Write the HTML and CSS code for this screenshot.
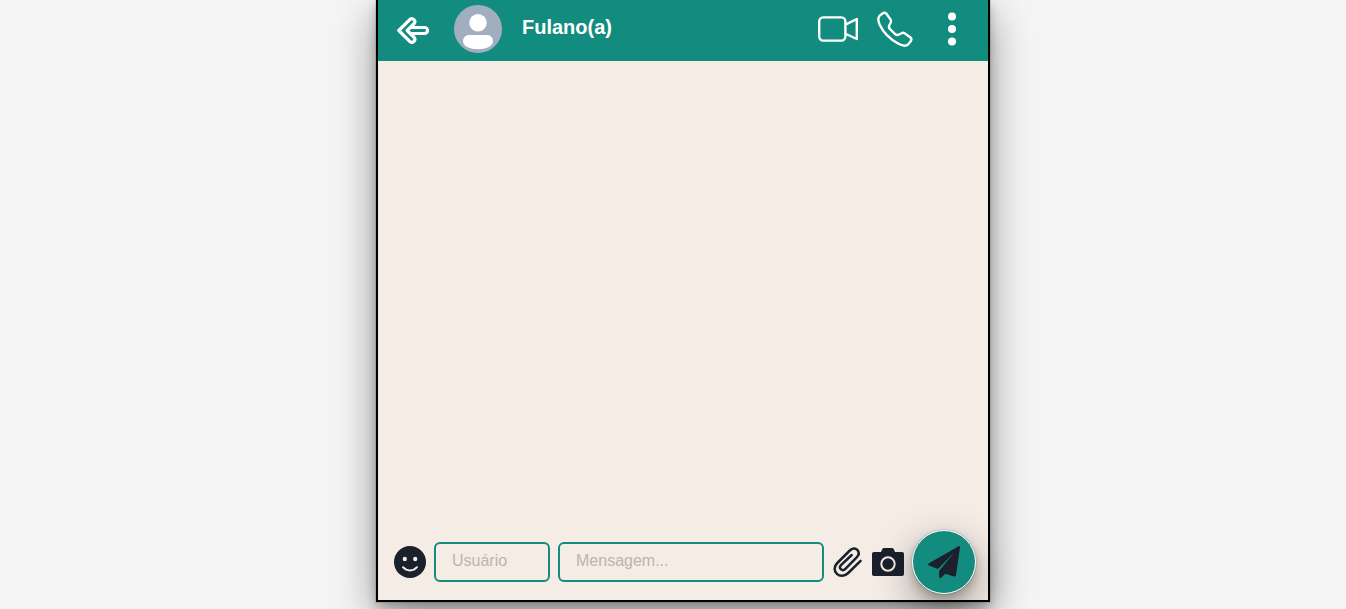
FILE: index.html
```html
<!DOCTYPE html>
<html lang="pt-BR">
<head>
<meta charset="utf-8">
<meta name="viewport" content="width=device-width, initial-scale=1">
<title>Chat</title>
<link rel="stylesheet" href="styles.css">
</head>
<body>
<main class="chat">
  <header class="chat-header">
    <button class="icon-button back" type="button" aria-label="Voltar">
      <svg class="icon" viewBox="0 0 32 32" fill="none" stroke="#fff" stroke-width="3.200" stroke-linejoin="round" stroke-linecap="round"><path d="M1.800 16.500 13 5.300a3 3 0 0 1 4.200 4.200l-7 7h0l3-3h14.300a3 3 0 0 1 0 6H13.200l-3-3 7 7a3 3 0 0 1-4.200 4.200L1.800 16.500Z"/></svg>
    </button>
    <svg class="avatar" viewBox="0 0 48 48" role="img" aria-label="Avatar"><circle cx="24" cy="24" r="24" fill="#a0aec0"/><circle cx="24" cy="17.700" r="8.800" fill="#fff"/><path d="M9 36.500C9 32.500 11.500 30 15.500 30h17c4 0 6.500 2.500 6.500 6.500C38.500 41.500 32 44.200 24 44.200S9.500 41.500 9 36.500Z" fill="#fff"/></svg>
    <h1 class="contact">Fulano(a)</h1>
    <nav class="actions">
      <button class="icon-button" type="button" aria-label="Chamada de vídeo">
        <svg class="icon-large" viewBox="0 0 40 40" fill="none" stroke="#fff" stroke-width="2.400" stroke-linejoin="round"><rect x="1.200" y="8.400" width="26.200" height="23.200" rx="4"/><path d="M28 15.400 38.800 10v20L28 25"/></svg>
      </button>
      <button class="icon-button" type="button" aria-label="Chamada de voz">
        <svg class="icon-large" viewBox="0 0 40 40" fill="none" stroke="#fff" stroke-width="2.400" stroke-linejoin="round"><path d="M4.500 6.900 7.500 4.500C9 3.300 10.500 3.600 11.600 5L15.600 10.600C16.400 11.800 16.400 12.900 15.600 14L14.400 16C13.500 17.500 14 19 15 20.200L20 25C21.300 26.100 22.600 26.300 24 25.500L26.500 24.200C27.600 23.500 28.600 23.500 29.600 24.200L35.200 28.300C36.600 29.400 36.700 30.800 35.700 32.200L33.200 35.300C31.300 37.200 28 37.200 23.500 34.800C14.500 29.900 8 23 4.600 15.500C2.800 11 2.700 8.800 4.500 6.900Z"/></svg>
      </button>
      <button class="icon-button" type="button" aria-label="Mais opções">
        <svg class="icon-large" viewBox="0 0 40 40" fill="#fff"><circle cx="20" cy="7.500" r="4"/><circle cx="20" cy="20" r="4"/><circle cx="20" cy="32.500" r="4"/></svg>
      </button>
    </nav>
  </header>
  <section class="messages" aria-label="Mensagens"></section>
  <form class="composer">
    <button class="icon-button" type="button" aria-label="Emojis">
      <svg class="icon" viewBox="0 0 32 32"><circle cx="16" cy="16" r="16" fill="#1a202c"/><ellipse cx="10.800" cy="13" rx="2.100" ry="2.200" fill="#f5ece6"/><ellipse cx="21.200" cy="13" rx="2.100" ry="2.200" fill="#f5ece6"/><path d="M9 21.200c3.700 4.300 10.300 4.300 14 0" fill="none" stroke="#f5ece6" stroke-width="2" stroke-linecap="round"/></svg>
    </button>
    <input class="field user" type="text" placeholder="Usuário" aria-label="Usuário">
    <input class="field message" type="text" placeholder="Mensagem..." aria-label="Mensagem">
    <button class="icon-button" type="button" aria-label="Anexar">
      <svg class="icon" viewBox="0 0 32 32" fill="none" stroke="#1a202c" stroke-width="2.500" stroke-linecap="round" stroke-linejoin="round"><path d="M28.600 14.800 16.200 27C12.800 30.300 8 30.700 4.900 27.800C1.700 24.800 2 20.300 5.300 17L17.800 4.500C20.300 2.100 23.300 1.800 25.300 3.900C27.200 6 27 9 24.700 11.400L13.400 22.800C12 24.200 10 24.300 8.800 23.200C7.600 22.100 7.600 20.500 9 19.100L19.700 9"/></svg>
    </button>
    <button class="icon-button" type="button" aria-label="Câmera">
      <svg class="icon" viewBox="0 0 32 32"><path d="M2 6h7l1.300-3c.4-.7.900-1 1.700-1h8c.8 0 1.300.3 1.700 1L23 6h7c1.200 0 2 .8 2 2v20c0 1.200-.8 2-2 2H2c-1.200 0-2-.8-2-2V8c0-1.200.8-2 2-2Z" fill="#1a202c"/><circle cx="16" cy="18" r="6.700" fill="none" stroke="#f5ece6" stroke-width="2"/></svg>
    </button>
    <button class="send" type="submit" aria-label="Enviar">
      <svg class="icon" viewBox="0 0 32 32" fill="#1a202c"><path d="M30.600.2 1 17.200c-1.300.8-1.300 1.800 0 2.300L8.500 22.400c1 .4 1.800.3 2.600-.5L26.500 6 11.500 24.600c-.3.300-.4.600-.4 1v4.900c0 1.600 1.400 2 2.400.9l3.800-3.700 8.700 2.700c1 .4 1.800 0 2-1.200L32 1.500c.2-1.100-.5-1.800-1.400-1.300Z"/></svg>
    </button>
  </form>
</main>
</body>
</html>
```
FILE: styles.css
```css
* {
  box-sizing: border-box;
}

body {
  min-height: 100vh;
  margin: 0;
  padding: 0 0 7px 20px;
  background: #f5f5f5;
  color: #1a202c;
  font-family: "Liberation Sans", Arial, sans-serif;
  font-size: 16px;
  line-height: 24px;
  overflow: hidden;
}

.chat {
  display: flex;
  flex-direction: column;
  width: 100%;
  max-width: 614px;
  height: calc(100vh - 7px);
  margin: 0 auto;
  border: 2px solid #000;
  border-top: 0;
  background: #f5ece6;
  box-shadow: rgba(0, 0, 0, 0.1) 0 0 0 1px, rgba(0, 0, 0, 0.2) 0 5px 10px, rgba(0, 0, 0, 0.4) 0 15px 40px;
}

.chat-header {
  display: flex;
  align-items: center;
  padding: 5px 16px 8px;
  background: #128c7e;
}

.icon-button {
  display: flex;
  flex: none;
  padding: 0;
  border: 0;
  background: none;
  cursor: pointer;
}

.back {
  margin: 2px 25px 0 3px;
}

.icon {
  width: 32px;
  height: 32px;
}

.icon-large {
  width: 40px;
  height: 40px;
}

.avatar {
  width: 48px;
  height: 48px;
}

.contact {
  margin: 0 0 4px 20px;
  color: #fff;
  font-size: 20px;
  line-height: 24px;
}

.actions {
  display: flex;
  gap: 17px;
  margin-left: auto;
}

.messages {
  flex: 1;
}

.composer {
  display: flex;
  align-items: center;
  gap: 8px;
  padding: 0 12px 6px 16px;
}

.field {
  height: 40px;
  min-width: 0;
  padding: 0 16px 2px;
  border: 2px solid #128c7e;
  border-radius: 6px;
  background: transparent;
  color: #1a202c;
  font: inherit;
}

.field::placeholder {
  color: #bbb4b0;
  opacity: 1;
}

.user {
  width: 116px;
}

.message {
  flex: 1;
}

.send {
  display: flex;
  flex: none;
  align-items: center;
  justify-content: center;
  width: 64px;
  height: 64px;
  padding: 0;
  border: 1px solid #fff;
  border-radius: 50%;
  background: #128c7e;
  box-shadow: rgba(0, 0, 0, 0.1) 0 0 0 1px, rgba(0, 0, 0, 0.2) 0 5px 10px, rgba(0, 0, 0, 0.4) 0 15px 40px;
  cursor: pointer;
}
```
